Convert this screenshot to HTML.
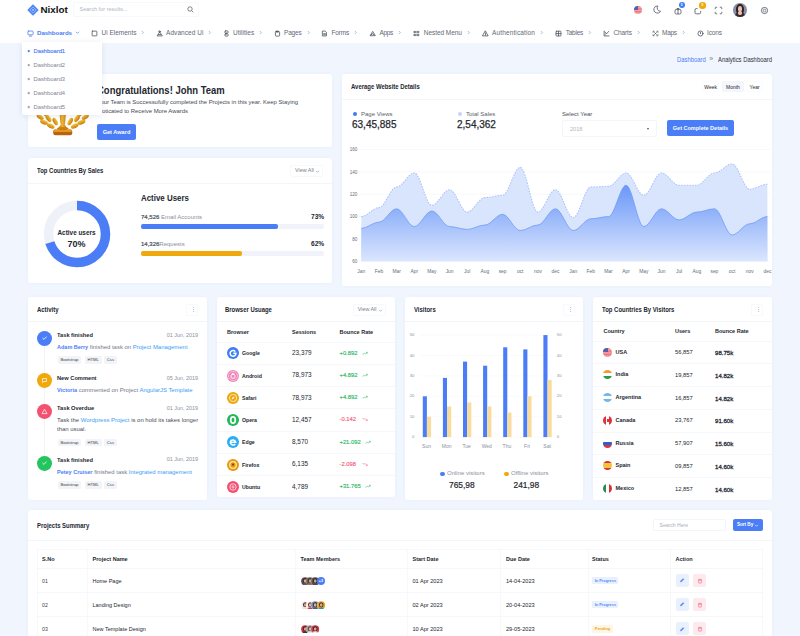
<!DOCTYPE html><html><head><meta charset="utf-8"><title>Nixlot Dashboard</title><style>
*{box-sizing:border-box;margin:0;padding:0}
html,body{width:800px;height:636px;overflow:hidden}
body{background:#f1f6fe;font-family:"Liberation Sans",sans-serif;color:#2b2f3a;position:relative;font-size:6.5px}
.a{position:absolute;white-space:nowrap}
.card{position:absolute;background:#fff;border-radius:3px;box-shadow:0 0 5px rgba(120,150,220,.07)}
.hd{position:absolute;left:0;right:0;top:0;border-bottom:1px solid #f1f3f8}
.t{position:absolute;white-space:nowrap;font-weight:bold;font-size:6.4px;color:#23272f;transform:scaleX(.93);transform-origin:0 50%}
.nx{transform:scaleX(.92);transform-origin:0 50%}
.b{font-weight:bold}
.blue{color:#4a7df6}
.lb{color:#3b9ef5}
.g{color:#8a8f9c}
.g2{color:#757a87}
.nb{font-weight:bold;font-size:5.5px}
.axy{font-size:4.6px;fill:#666b78;font-family:"Liberation Sans",sans-serif}
.ax{font-size:4.9px;fill:#666b78;font-family:"Liberation Sans",sans-serif}
.ax2{font-size:4.2px;fill:#8a8f9c;font-family:"Liberation Sans",sans-serif}
.ax3{font-size:5px;fill:#8a8f9c;font-family:"Liberation Sans",sans-serif}
.btn{position:absolute;background:#4a7df6;color:#fff;font-weight:bold;border-radius:2px;text-align:center;white-space:nowrap}
.sq{position:absolute;border:1px solid #f1f3f8;border-radius:2px;background:#fff}
.tag{position:absolute;font-size:4.2px;color:#3a3f4a;background:#f3f4f8;border-radius:1.5px;height:7.4px;line-height:7.4px;padding:0 2.9px;white-space:nowrap}
.ln{position:absolute;height:1px;background:#f3f5f9}
.ln2{position:absolute;height:1px;background:#f6f7fb}
.circ{position:absolute;border-radius:50%}
.nav{position:absolute;top:28.5px;font-size:6.6px;color:#636978;white-space:nowrap}
</style></head><body><div class="a" style="left:0;top:0;width:800px;height:23px;background:#fff;border-bottom:1px solid #f2f4f8"></div>
<div class="a" style="left:0;top:22px;width:800px;height:21px;background:#fff"></div>
<svg class="a" style="left:26.7px;top:3.8px" width="12" height="12" viewBox="0 0 12 12"><path d="M6 .3L11.700 6L6 11.700L.300 6Z" fill="#4a84f8"/><path d="M6 2.800L9.200 6L6 9.200L2.800 6Z" fill="none" stroke="#a9c6fc" stroke-width=".8"/><path d="M4.700 6L6 4.700L7.300 6L6 7.300Z" fill="#a9c6fc"/></svg>
<div class="a" style="left:40.5px;top:4px;font-size:9.8px;font-weight:bold;color:#111;letter-spacing:0px">Nixlot</div>
<div class="sq" style="left:73px;top:1.8px;width:126px;height:15.4px;border-color:#f7f8fc"></div>
<div class="a" style="left:79.5px;top:6.3px;font-size:5.55px;color:#b0b5bf">Search for results...</div>
<svg class="a" style="left:187px;top:6px" width="7" height="7" viewBox="0 0 7 7"><circle cx="3" cy="3" r="2.2" fill="none" stroke="#555" stroke-width=".7"/><path d="M4.7 4.7L6.2 6.2" stroke="#555" stroke-width=".7"/></svg>
<div class="circ" style="left:633.6px;top:5.6px;width:8.6px;height:8.6px;overflow:hidden;background:linear-gradient(#e8636f 0,#f3a3aa 18%,#ee7580 36%,#f3a3aa 54%,#ee7580 72%,#f3a3aa 90%)"><div class="a" style="left:0;top:0;width:4.6px;height:4.6px;background:#5960a8"></div></div>
<svg class="a" style="left:652.5px;top:5px" width="9" height="9" viewBox="0 0 9 9"><path d="M5 1 A3.6 3.6 0 1 0 7.6 6.2 A3.1 3.1 0 0 1 5 1Z" fill="none" stroke="#5a6070" stroke-width=".85" stroke-linejoin="round"/></svg>
<svg class="a" style="left:673.5px;top:6.6px" width="8" height="8" viewBox="0 0 8 8" fill="none" stroke="#4b5160" stroke-width=".8"><rect x="1" y="2.4" width="6" height="4.6" rx="1.4"/><path d="M2.4 2.4Q4 -.2 4 2.6Q4 -.2 5.6 2.4M4 2.6v4.4"/></svg>
<div class="circ" style="left:678.6px;top:2px;width:6.4px;height:6.4px;background:#3d7df5;color:#fff;font-size:3.4px;font-weight:bold;text-align:center;line-height:6.4px">5</div>
<svg class="a" style="left:694.3px;top:6.8px" width="8" height="8" viewBox="0 0 8 8" fill="none" stroke="#4b5160" stroke-width=".8"><path d="M3.6 1.6H2.2A1.2 1.2 0 0 0 1 2.8V5.6A1.2 1.2 0 0 0 2.2 6.8H5.4A1.2 1.2 0 0 0 6.6 5.6V4"/></svg>
<div class="circ" style="left:699.2px;top:2.4px;width:6.4px;height:6.4px;background:#f0a90c;color:#fff;font-size:3.4px;font-weight:bold;text-align:center;line-height:6.4px">5</div>
<svg class="a" style="left:714.2px;top:6.2px" width="9" height="9" viewBox="0 0 9 9"><path d="M1.2 3.2V2A.8 .8 0 0 1 2 1.2H3.2 M5.8 1.2H7A.8 .8 0 0 1 7.8 2V3.2 M7.8 5.8V7A.8 .8 0 0 1 7 7.8H5.8 M3.2 7.8H2A.8 .8 0 0 1 1.2 7V5.8" fill="none" stroke="#5a6070" stroke-width=".85"/></svg>
<div class="circ" style="left:733px;top:3px;width:13.7px;height:13.7px;background:#8a8fa8;overflow:hidden"><div class="circ" style="left:2.6px;top:1px;width:8.6px;height:11px;background:#2b2226"></div><div class="circ" style="left:4.6px;top:3px;width:4.6px;height:5.6px;background:#e9c3b0"></div><div class="circ" style="left:1.5px;top:9.4px;width:10.6px;height:8px;background:#3a2a30"></div><div class="circ" style="left:5.2px;top:8.2px;width:3.4px;height:3.4px;background:#e9c3b0"></div></div>
<svg class="a" style="left:760.2px;top:6.2px" width="9" height="9" viewBox="0 0 9 9" fill="none" stroke="#5a6070"><circle cx="4.5" cy="4.5" r="3.1" stroke-width=".9"/><circle cx="4.5" cy="4.5" r="1.3" stroke-width=".7"/></svg>
<div class="nav" style="left:37px;font-size:6.20px;letter-spacing:-0.082px;color:#4a7df6;font-weight:bold;">Dashboards</div>
<svg class="a" style="left:26.6px;top:29.5px" width="7" height="7" viewBox="0 0 8 8" fill="none" stroke="#4a7df6" stroke-width=".9" stroke-linecap="round" stroke-linejoin="round"><rect x="1" y="1.2" width="6" height="4.3" rx=".9"/><path d="M2.8 7h2.4"/></svg>
<div class="nav" style="left:101.5px;font-size:6.50px;letter-spacing:-0.001px;">Ui Elements</div>
<svg class="a" style="left:91.1px;top:29.5px" width="7" height="7" viewBox="0 0 8 8" fill="none" stroke="#4b5160" stroke-width=".9" stroke-linecap="round" stroke-linejoin="round"><rect x="1.3" y="1.3" width="5.4" height="5.4" rx=".5"/></svg>
<div class="nav" style="left:166px;font-size:6.50px;letter-spacing:0.061px;">Advanced Ui</div>
<svg class="a" style="left:155.6px;top:29.5px" width="7" height="7" viewBox="0 0 8 8" fill="none" stroke="#4b5160" stroke-width=".9" stroke-linecap="round" stroke-linejoin="round"><path d="M4 2.6L1.2 6.8H6.8Z"/><circle cx="4" cy="1.8" r=".9"/><path d="M2.8 5.2h2.4"/></svg>
<div class="nav" style="left:233px;font-size:6.50px;letter-spacing:0.036px;">Utilities</div>
<svg class="a" style="left:222.6px;top:29.5px" width="7" height="7" viewBox="0 0 8 8" fill="none" stroke="#4b5160" stroke-width=".9" stroke-linecap="round" stroke-linejoin="round"><rect x="2.2" y="1" width="3.6" height="2.6" rx=".7"/><rect x="2.2" y="4.4" width="3.6" height="2.6" rx=".7"/><path d="M4 3.6v.8"/></svg>
<div class="nav" style="left:284px;font-size:6.50px;letter-spacing:-0.183px;">Pages</div>
<svg class="a" style="left:273.6px;top:29.5px" width="7" height="7" viewBox="0 0 8 8" fill="none" stroke="#4b5160" stroke-width=".9" stroke-linecap="round" stroke-linejoin="round"><rect x="1.6" y="1.8" width="4.8" height="5.2" rx=".8"/><path d="M3 1.2h2v1.2h-2z"/></svg>
<div class="nav" style="left:331.5px;font-size:6.50px;letter-spacing:-0.183px;">Forms</div>
<svg class="a" style="left:321.1px;top:29.5px" width="7" height="7" viewBox="0 0 8 8" fill="none" stroke="#4b5160" stroke-width=".9" stroke-linecap="round" stroke-linejoin="round"><path d="M2 1.2h2.8L6.2 2.6V6.8H2Z"/><path d="M3 4.2h2M3 5.4h2"/></svg>
<div class="nav" style="left:379.5px;font-size:6.50px;letter-spacing:-0.326px;">Apps</div>
<svg class="a" style="left:369.1px;top:29.5px" width="7" height="7" viewBox="0 0 8 8" fill="none" stroke="#4b5160" stroke-width=".9" stroke-linecap="round" stroke-linejoin="round"><path d="M4 2L1.2 6.5h5.6Z"/><path d="M2.7 5.5a1.3 1.3 0 0 1 2.6 0"/></svg>
<div class="nav" style="left:423.75px;font-size:6.50px;letter-spacing:-0.055px;">Nested Menu</div>
<svg class="a" style="left:413.35px;top:29.5px" width="7" height="7" viewBox="0 0 8 8" fill="none" stroke="#4b5160" stroke-width=".9" stroke-linecap="round" stroke-linejoin="round"><path d="M1.5 1.6h1.4v1.4h-1.4zM1.5 5h1.4v1.4h-1.4zM4.3 1.6h2.4M4.3 3h2.4M4.3 5h2.4M4.3 6.4h2.4"/></svg>
<div class="nav" style="left:492px;font-size:6.50px;letter-spacing:0.131px;">Authentication</div>
<svg class="a" style="left:481.6px;top:29.5px" width="7" height="7" viewBox="0 0 8 8" fill="none" stroke="#4b5160" stroke-width=".9" stroke-linecap="round" stroke-linejoin="round"><path d="M4 1.3L7 6.7H1Z"/><path d="M4 3.4v1.6M4 5.7v.3"/></svg>
<div class="nav" style="left:565.75px;font-size:6.50px;letter-spacing:-0.254px;">Tables</div>
<svg class="a" style="left:555.35px;top:29.5px" width="7" height="7" viewBox="0 0 8 8" fill="none" stroke="#4b5160" stroke-width=".9" stroke-linecap="round" stroke-linejoin="round"><rect x="1.2" y="1.4" width="5.6" height="5.4" rx=".5"/><path d="M1.2 4.1h5.6M4 1.4v5.4"/></svg>
<div class="nav" style="left:613.5px;font-size:6.50px;letter-spacing:-0.146px;">Charts</div>
<svg class="a" style="left:603.1px;top:29.5px" width="7" height="7" viewBox="0 0 8 8" fill="none" stroke="#4b5160" stroke-width=".9" stroke-linecap="round" stroke-linejoin="round"><path d="M1.3 1.2V6.8H6.9"/><path d="M2.3 2.2L3.8 4.6L6.6 1.6"/><path d="M2.6 5.6h.2"/></svg>
<div class="nav" style="left:662px;font-size:6.50px;letter-spacing:-0.277px;">Maps</div>
<svg class="a" style="left:651.6px;top:29.5px" width="7" height="7" viewBox="0 0 8 8" fill="none" stroke="#4b5160" stroke-width=".9" stroke-linecap="round" stroke-linejoin="round"><path d="M1.2 2.6V1.4h1.2M5.6 1.4h1.2v1.2M6.8 5.4v1.2h-1.2M2.4 6.6H1.2V5.4"/><path d="M3 3l2 2M5 3l-2 2"/></svg>
<div class="nav" style="left:707px;font-size:6.50px;letter-spacing:-0.156px;">Icons</div>
<svg class="a" style="left:696.6px;top:29.5px" width="7" height="7" viewBox="0 0 8 8" fill="none" stroke="#4b5160" stroke-width=".9" stroke-linecap="round" stroke-linejoin="round"><circle cx="4" cy="4" r="2.9"/><path d="M4 2.6v1.6"/></svg>
<svg class="a" style="left:75.3px;top:30px" width="5" height="5" viewBox="0 0 5 5"><path d="M1 1.8L2.5 3.3L4 1.8" fill="none" stroke="#4a7df6" stroke-width=".7"/></svg>
<svg class="a" style="left:140px;top:30px" width="5" height="5" viewBox="0 0 5 5"><path d="M1.8 1L3.3 2.5L1.8 4" fill="none" stroke="#8a8f9c" stroke-width=".6"/></svg>
<svg class="a" style="left:206.5px;top:30px" width="5" height="5" viewBox="0 0 5 5"><path d="M1.8 1L3.3 2.5L1.8 4" fill="none" stroke="#8a8f9c" stroke-width=".6"/></svg>
<svg class="a" style="left:257.8px;top:30px" width="5" height="5" viewBox="0 0 5 5"><path d="M1.8 1L3.3 2.5L1.8 4" fill="none" stroke="#8a8f9c" stroke-width=".6"/></svg>
<svg class="a" style="left:305.5px;top:30px" width="5" height="5" viewBox="0 0 5 5"><path d="M1.8 1L3.3 2.5L1.8 4" fill="none" stroke="#8a8f9c" stroke-width=".6"/></svg>
<svg class="a" style="left:352.8px;top:30px" width="5" height="5" viewBox="0 0 5 5"><path d="M1.8 1L3.3 2.5L1.8 4" fill="none" stroke="#8a8f9c" stroke-width=".6"/></svg>
<svg class="a" style="left:397.2px;top:30px" width="5" height="5" viewBox="0 0 5 5"><path d="M1.8 1L3.3 2.5L1.8 4" fill="none" stroke="#8a8f9c" stroke-width=".6"/></svg>
<svg class="a" style="left:465.5px;top:30px" width="5" height="5" viewBox="0 0 5 5"><path d="M1.8 1L3.3 2.5L1.8 4" fill="none" stroke="#8a8f9c" stroke-width=".6"/></svg>
<svg class="a" style="left:539px;top:30px" width="5" height="5" viewBox="0 0 5 5"><path d="M1.8 1L3.3 2.5L1.8 4" fill="none" stroke="#8a8f9c" stroke-width=".6"/></svg>
<svg class="a" style="left:587px;top:30px" width="5" height="5" viewBox="0 0 5 5"><path d="M1.8 1L3.3 2.5L1.8 4" fill="none" stroke="#8a8f9c" stroke-width=".6"/></svg>
<svg class="a" style="left:635.5px;top:30px" width="5" height="5" viewBox="0 0 5 5"><path d="M1.8 1L3.3 2.5L1.8 4" fill="none" stroke="#8a8f9c" stroke-width=".6"/></svg>
<svg class="a" style="left:680.8px;top:30px" width="5" height="5" viewBox="0 0 5 5"><path d="M1.8 1L3.3 2.5L1.8 4" fill="none" stroke="#8a8f9c" stroke-width=".6"/></svg>
<div class="a nx" style="left:676.5px;top:55.6px;font-size:6.4px;color:#4a7df6">Dashboard</div>
<div class="a" style="left:709.3px;top:54.6px;font-size:7px;color:#7a7f8c">»</div>
<div class="a nx" style="left:717.5px;top:55.6px;font-size:6.4px;color:#2b2f3a">Analytics Dashboard</div>
<div class="card" style="left:28.3px;top:74.2px;width:303.7px;height:72.4px"></div>
<div class="card" style="left:28.3px;top:158.3px;width:303.7px;height:125.2px"></div>
<div class="card" style="left:341.7px;top:74.2px;width:430.3px;height:212.3px"></div>
<div class="card" style="left:28px;top:297px;width:179px;height:203px"></div>
<div class="card" style="left:217px;top:297px;width:178px;height:200.4px"></div>
<div class="card" style="left:405px;top:297px;width:178px;height:203px"></div>
<div class="card" style="left:593px;top:297px;width:179px;height:203px"></div>
<div class="card" style="left:28px;top:510.3px;width:744px;height:140px"></div>
<div class="a nx" style="left:97px;top:84.8px;font-size:10.3px;font-weight:bold;color:#23272f">Congratulations! John Team</div>
<div class="a" style="left:97px;top:98.8px;font-size:5.9px;color:#444955">Your Team is Successufully completed the Projects in this year. Keep Staying</div>
<div class="a" style="left:97px;top:107.8px;font-size:5.9px;color:#444955">Moticated to Receive More Awards</div>
<div class="btn" style="left:97px;top:124px;width:39px;height:16px;line-height:16px;font-size:5.6px">Get Award</div>
<svg class="a" style="left:0;top:0" width="140" height="150" viewBox="0 0 140 150"><defs><linearGradient id="tg" x1="0" y1="0" x2="0" y2="1"><stop offset="0" stop-color="#f7c83c"/><stop offset="1" stop-color="#c87a0a"/></linearGradient><linearGradient id="ts" x1="0" y1="0" x2="1" y2="0"><stop offset="0" stop-color="#b8680a"/><stop offset=".45" stop-color="#f0b832"/><stop offset="1" stop-color="#b8680a"/></linearGradient></defs><path d="M50 88h25.5v14q0 10 -9.5 12.5h-6.500q-9.500 -2.500 -9.500 -12.500z" fill="url(#ts)"/><path d="M59.300 110H66.200L65.400 120Q65.200 124 64.600 124.500L67.500 128.500H58L60.900 124.500Q60.300 124 60.100 120Z" fill="url(#ts)"/><rect x="53.2" y="129.6" width="19.1" height="5.6" rx="2.2" fill="#b9630c"/><rect x="53.6" y="129.4" width="18.3" height="2.6" rx="1.3" fill="#e39a22"/><ellipse cx="62.750" cy="128.600" rx="5.800" ry="1.700" fill="#cf7d10"/><ellipse cx="40.25" cy="117.00" rx="4.1" ry="2.1" transform="rotate(35 40.25 117.00)" fill="url(#tg)"/><ellipse cx="85.25" cy="117.00" rx="4.1" ry="2.1" transform="rotate(-35 85.25 117.00)" fill="url(#tg)"/><ellipse cx="48.50" cy="118.50" rx="4.1" ry="2.1" transform="rotate(55 48.50 118.50)" fill="url(#tg)"/><ellipse cx="77.00" cy="118.50" rx="4.1" ry="2.1" transform="rotate(-55 77.00 118.50)" fill="url(#tg)"/><ellipse cx="44.00" cy="122.25" rx="4.1" ry="2.1" transform="rotate(20 44.00 122.25)" fill="url(#tg)"/><ellipse cx="81.50" cy="122.25" rx="4.1" ry="2.1" transform="rotate(-20 81.50 122.25)" fill="url(#tg)"/><ellipse cx="50.75" cy="126.00" rx="4.1" ry="2.1" transform="rotate(25 50.75 126.00)" fill="url(#tg)"/><ellipse cx="74.75" cy="126.00" rx="4.1" ry="2.1" transform="rotate(-25 74.75 126.00)" fill="url(#tg)"/><ellipse cx="55.25" cy="121.50" rx="4.1" ry="2.1" transform="rotate(60 55.25 121.50)" fill="url(#tg)"/><ellipse cx="70.25" cy="121.50" rx="4.1" ry="2.1" transform="rotate(-60 70.25 121.50)" fill="url(#tg)"/><ellipse cx="36.50" cy="112.00" rx="4.1" ry="2.1" transform="rotate(50 36.50 112.00)" fill="url(#tg)"/><ellipse cx="89.00" cy="112.00" rx="4.1" ry="2.1" transform="rotate(-50 89.00 112.00)" fill="url(#tg)"/><ellipse cx="45.00" cy="112.50" rx="4.1" ry="2.1" transform="rotate(70 45.00 112.50)" fill="url(#tg)"/><ellipse cx="80.50" cy="112.50" rx="4.1" ry="2.1" transform="rotate(-70 80.50 112.50)" fill="url(#tg)"/></svg>
<div class="t" style="left:37px;top:167px;">Top Countries By Sales</div>
<div class="sq" style="left:290px;top:164.5px;width:33px;height:12px;border-color:#f7f8fb"></div>
<div class="a" style="left:295px;top:167.2px;font-size:5.4px;color:#7a7f8c">View All</div>
<svg class="a" style="left:315px;top:168.5px" width="5" height="5" viewBox="0 0 5 5"><path d="M1 1.8L2.5 3.3L4 1.8" fill="none" stroke="#8a8f9c" stroke-width=".6"/></svg>
<div class="ln" style="left:28px;top:182.6px;width:304px"></div>
<svg class="a" style="left:42.6px;top:199.7px" width="68" height="68" viewBox="0 0 68 68"><circle cx="34" cy="34" r="28.5" fill="none" stroke="#eef1f8" stroke-width="9.5"/><circle cx="34" cy="34" r="28.5" fill="none" stroke="#4a7df6" stroke-width="9.5" stroke-dasharray="125.3 200" transform="rotate(-90 34 34)"/></svg>
<div class="a" style="left:57.5px;top:228.6px;font-size:6.4px;font-weight:bold;color:#23272f">Active users</div>
<div class="a" style="left:67.5px;top:239px;font-size:9px;color:#23272f;font-weight:bold">70%</div>
<div class="a nx" style="left:141px;top:192.5px;font-size:8.6px;color:#23272f;font-weight:bold">Active Users</div>
<div class="a" style="left:141px;top:213.5px;font-size:6px"><span style="color:#4a4f5a;-webkit-text-stroke:.2px #4a4f5a">74,526</span> <span class="g">Email Accounts</span></div>
<div class="a" style="left:311px;top:213px;font-size:6.6px;font-weight:bold;color:#23272f">73%</div>
<div class="a" style="left:141px;top:224.4px;width:183px;height:4.9px;background:#f0f3f9;border-radius:2px"></div>
<div class="a" style="left:141px;top:224.4px;width:137px;height:4.9px;background:#4a7df6;border-radius:2px"></div>
<div class="a" style="left:141px;top:240.5px;font-size:6px"><span style="color:#4a4f5a;-webkit-text-stroke:.2px #4a4f5a">14,326</span><span class="g">Requests</span></div>
<div class="a" style="left:311px;top:240px;font-size:6.6px;font-weight:bold;color:#23272f">62%</div>
<div class="a" style="left:141px;top:251px;width:183px;height:5px;background:#f0f3f9;border-radius:2px"></div>
<div class="a" style="left:141px;top:251px;width:101px;height:5px;background:#f0a90c;border-radius:2px"></div>
<div class="t" style="left:351px;top:83.2px;">Average Website Details</div>
<div class="ln" style="left:342px;top:98.7px;width:430px"></div>
<div class="sq" style="left:702.4px;top:81px;width:17px;height:11px;border-color:#fafbfd"></div><div class="sq" style="left:722px;top:81px;width:22px;height:11px;background:#f5f7fc;border-color:#f3f5fa"></div><div class="sq" style="left:746.4px;top:81px;width:16.6px;height:11px;border-color:#fafbfd"></div>
<div class="a" style="left:704.3px;top:84.2px;font-size:5px;color:#23272f">Week</div>
<div class="a" style="left:726px;top:84.2px;font-size:5px;color:#23272f">Month</div>
<div class="a" style="left:749.5px;top:84.2px;font-size:5px;color:#23272f">Year</div>
<div class="circ" style="left:352.6px;top:111.8px;width:4.5px;height:4.5px;background:#3f7af5"></div>
<div class="a" style="left:361px;top:110.7px;font-size:6px;color:#5a5f6c">Page Views</div>
<div class="a" style="left:352px;top:118.7px;font-size:10px;color:#23272f;-webkit-text-stroke:.25px #23272f">63,45,885</div>
<div class="circ" style="left:457.6px;top:111.8px;width:4.5px;height:4.5px;background:#c5d6fb"></div>
<div class="a" style="left:466px;top:110.7px;font-size:6px;color:#5a5f6c">Total Sales</div>
<div class="a" style="left:457px;top:118.7px;font-size:10px;color:#23272f;-webkit-text-stroke:.25px #23272f">2,54,362</div>
<div class="a" style="left:562px;top:110.8px;font-size:6px;color:#4a4f5a">Select Year</div>
<div class="sq" style="left:562px;top:120px;width:95px;height:17px;border-color:#f3f5f9"></div>
<div class="a" style="left:570px;top:125.5px;font-size:5.6px;color:#b3b7c0">2018</div>
<div class="a" style="left:647px;top:127.6px;border:1.9px solid transparent;border-top:2.2px solid #4b5160;"></div>
<div class="btn" style="left:667px;top:120px;width:67px;height:16px;line-height:16px;font-size:5.5px">Get Complete Details</div>
<svg class="a" style="left:0;top:0" width="800" height="636" viewBox="0 0 800 636"><defs><linearGradient id="ag" x1="0" y1="0" x2="0" y2="1"><stop offset="0" stop-color="#6a97f8"/><stop offset="1" stop-color="#dbe6fd"/></linearGradient></defs><line x1="359" x2="770" y1="261.3" y2="261.3" stroke="#f1f3f8" stroke-width="0.6"/>
<line x1="359" x2="770" y1="238.9" y2="238.9" stroke="#f1f3f8" stroke-width="0.6"/>
<line x1="359" x2="770" y1="216.6" y2="216.6" stroke="#f1f3f8" stroke-width="0.6"/>
<line x1="359" x2="770" y1="194.2" y2="194.2" stroke="#f1f3f8" stroke-width="0.6"/>
<line x1="359" x2="770" y1="171.9" y2="171.9" stroke="#f1f3f8" stroke-width="0.6"/>
<line x1="359" x2="770" y1="149.5" y2="149.5" stroke="#f1f3f8" stroke-width="0.6"/>
<path d="M361.3 216.6 C367.5 216.6 372.8 207.6 379.0 207.6 C385.1 207.6 390.4 187.0 396.6 187.0 C402.8 187.0 408.1 173.0 414.3 173.0 C420.4 173.0 425.7 205.4 431.9 205.4 C438.1 205.4 443.4 189.7 449.6 189.7 C455.8 189.7 461.1 212.1 467.2 212.1 C473.4 212.1 478.7 197.6 484.9 197.6 C491.1 197.6 496.4 195.3 502.6 195.3 C508.7 195.3 514.0 167.4 520.2 167.4 C526.4 167.4 531.7 212.1 537.9 212.1 C544.0 212.1 549.3 189.7 555.5 189.7 C561.7 189.7 567.0 217.7 573.2 217.7 C579.4 217.7 584.7 187.0 590.8 187.0 C597.0 187.0 602.3 186.4 608.5 186.4 C614.7 186.4 620.0 173.0 626.1 173.0 C632.3 173.0 637.6 195.3 643.8 195.3 C650.0 195.3 655.3 173.0 661.5 173.0 C667.6 173.0 672.9 185.3 679.1 185.3 C685.3 185.3 690.6 185.3 696.8 185.3 C703.0 185.3 708.3 173.0 714.4 173.0 C720.6 173.0 725.9 164.0 732.1 164.0 C738.3 164.0 743.6 189.2 749.7 189.2 C755.9 189.2 761.2 184.2 767.4 184.2 L767.4 261.3 L361.3 261.3 Z" fill="#d9e5fd"/>
<path d="M361.3 216.6 C367.5 216.6 372.8 207.6 379.0 207.6 C385.1 207.6 390.4 187.0 396.6 187.0 C402.8 187.0 408.1 173.0 414.3 173.0 C420.4 173.0 425.7 205.4 431.9 205.4 C438.1 205.4 443.4 189.7 449.6 189.7 C455.8 189.7 461.1 212.1 467.2 212.1 C473.4 212.1 478.7 197.6 484.9 197.6 C491.1 197.6 496.4 195.3 502.6 195.3 C508.7 195.3 514.0 167.4 520.2 167.4 C526.4 167.4 531.7 212.1 537.9 212.1 C544.0 212.1 549.3 189.7 555.5 189.7 C561.7 189.7 567.0 217.7 573.2 217.7 C579.4 217.7 584.7 187.0 590.8 187.0 C597.0 187.0 602.3 186.4 608.5 186.4 C614.7 186.4 620.0 173.0 626.1 173.0 C632.3 173.0 637.6 195.3 643.8 195.3 C650.0 195.3 655.3 173.0 661.5 173.0 C667.6 173.0 672.9 185.3 679.1 185.3 C685.3 185.3 690.6 185.3 696.8 185.3 C703.0 185.3 708.3 173.0 714.4 173.0 C720.6 173.0 725.9 164.0 732.1 164.0 C738.3 164.0 743.6 189.2 749.7 189.2 C755.9 189.2 761.2 184.2 767.4 184.2" fill="none" stroke="#adc4fa" stroke-width="1.1" stroke-dasharray="1.6 1.2"/>
<path d="M361.3 228.3 C367.5 228.3 372.8 222.2 379.0 222.2 C385.1 222.2 390.4 208.8 396.6 208.8 C402.8 208.8 408.1 226.6 414.3 226.6 C420.4 226.6 425.7 211.0 431.9 211.0 C438.1 211.0 443.4 226.6 449.6 226.6 C455.8 226.6 461.1 229.4 467.2 229.4 C473.4 229.4 478.7 225.0 484.9 225.0 C491.1 225.0 496.4 214.3 502.6 214.3 C508.7 214.3 514.0 230.6 520.2 230.6 C526.4 230.6 531.7 225.0 537.9 225.0 C544.0 225.0 549.3 208.8 555.5 208.8 C561.7 208.8 567.0 230.6 573.2 230.6 C579.4 230.6 584.7 218.8 590.8 218.8 C597.0 218.8 602.3 216.6 608.5 216.6 C614.7 216.6 620.0 185.3 626.1 185.3 C632.3 185.3 637.6 226.6 643.8 226.6 C650.0 226.6 655.3 208.8 661.5 208.8 C667.6 208.8 672.9 219.9 679.1 219.9 C685.3 219.9 690.6 212.1 696.8 212.1 C703.0 212.1 708.3 208.8 714.4 208.8 C720.6 208.8 725.9 235.0 732.1 235.0 C738.3 235.0 743.6 223.8 749.7 223.8 C755.9 223.8 761.2 216.6 767.4 216.6 L767.4 261.3 L361.3 261.3 Z" fill="url(#ag)"/>
<path d="M361.3 228.3 C367.5 228.3 372.8 222.2 379.0 222.2 C385.1 222.2 390.4 208.8 396.6 208.8 C402.8 208.8 408.1 226.6 414.3 226.6 C420.4 226.6 425.7 211.0 431.9 211.0 C438.1 211.0 443.4 226.6 449.6 226.6 C455.8 226.6 461.1 229.4 467.2 229.4 C473.4 229.4 478.7 225.0 484.9 225.0 C491.1 225.0 496.4 214.3 502.6 214.3 C508.7 214.3 514.0 230.6 520.2 230.6 C526.4 230.6 531.7 225.0 537.9 225.0 C544.0 225.0 549.3 208.8 555.5 208.8 C561.7 208.8 567.0 230.6 573.2 230.6 C579.4 230.6 584.7 218.8 590.8 218.8 C597.0 218.8 602.3 216.6 608.5 216.6 C614.7 216.6 620.0 185.3 626.1 185.3 C632.3 185.3 637.6 226.6 643.8 226.6 C650.0 226.6 655.3 208.8 661.5 208.8 C667.6 208.8 672.9 219.9 679.1 219.9 C685.3 219.9 690.6 212.1 696.8 212.1 C703.0 212.1 708.3 208.8 714.4 208.8 C720.6 208.8 725.9 235.0 732.1 235.0 C738.3 235.0 743.6 223.8 749.7 223.8 C755.9 223.8 761.2 216.6 767.4 216.6" fill="none" stroke="#6f9af8" stroke-width="0.8"/>
<text x="361.3" y="272.9" text-anchor="middle" class="ax">Jan</text>
<text x="379.0" y="272.9" text-anchor="middle" class="ax">Feb</text>
<text x="396.6" y="272.9" text-anchor="middle" class="ax">Mar</text>
<text x="414.3" y="272.9" text-anchor="middle" class="ax">Apr</text>
<text x="431.9" y="272.9" text-anchor="middle" class="ax">May</text>
<text x="449.6" y="272.9" text-anchor="middle" class="ax">Jun</text>
<text x="467.2" y="272.9" text-anchor="middle" class="ax">Jul</text>
<text x="484.9" y="272.9" text-anchor="middle" class="ax">Aug</text>
<text x="502.6" y="272.9" text-anchor="middle" class="ax">sep</text>
<text x="520.2" y="272.9" text-anchor="middle" class="ax">oct</text>
<text x="537.9" y="272.9" text-anchor="middle" class="ax">nov</text>
<text x="555.5" y="272.9" text-anchor="middle" class="ax">dec</text>
<text x="573.2" y="272.9" text-anchor="middle" class="ax">Jan</text>
<text x="590.8" y="272.9" text-anchor="middle" class="ax">Feb</text>
<text x="608.5" y="272.9" text-anchor="middle" class="ax">Mar</text>
<text x="626.1" y="272.9" text-anchor="middle" class="ax">Apr</text>
<text x="643.8" y="272.9" text-anchor="middle" class="ax">May</text>
<text x="661.5" y="272.9" text-anchor="middle" class="ax">Jun</text>
<text x="679.1" y="272.9" text-anchor="middle" class="ax">Jul</text>
<text x="696.8" y="272.9" text-anchor="middle" class="ax">Aug</text>
<text x="714.4" y="272.9" text-anchor="middle" class="ax">sep</text>
<text x="732.1" y="272.9" text-anchor="middle" class="ax">oct</text>
<text x="749.7" y="272.9" text-anchor="middle" class="ax">nov</text>
<text x="767.4" y="272.9" text-anchor="middle" class="ax">dec</text>
<text x="357.3" y="151.1" text-anchor="end" class="axy">160</text>
<text x="357.3" y="173.5" text-anchor="end" class="axy">140</text>
<text x="357.3" y="195.8" text-anchor="end" class="axy">120</text>
<text x="357.3" y="218.2" text-anchor="end" class="axy">100</text>
<text x="357.3" y="240.5" text-anchor="end" class="axy">80</text>
<text x="357.3" y="262.9" text-anchor="end" class="axy">60</text><line x1="420" x2="552" y1="437.1" y2="437.1" stroke="#f3f5f9" stroke-width="0.5"/>
<text x="414.3" y="438.1" text-anchor="end" class="ax2">0</text>
<text x="556.8" y="438.1" class="ax2">0</text>
<line x1="420" x2="552" y1="416.7" y2="416.7" stroke="#f3f5f9" stroke-width="0.5"/>
<text x="414.3" y="417.7" text-anchor="end" class="ax2">10</text>
<text x="556.8" y="417.7" class="ax2">10</text>
<line x1="420" x2="552" y1="396.3" y2="396.3" stroke="#f3f5f9" stroke-width="0.5"/>
<text x="414.3" y="397.3" text-anchor="end" class="ax2">20</text>
<text x="556.8" y="397.3" class="ax2">20</text>
<line x1="420" x2="552" y1="375.9" y2="375.9" stroke="#f3f5f9" stroke-width="0.5"/>
<text x="414.3" y="376.9" text-anchor="end" class="ax2">30</text>
<text x="556.8" y="376.9" class="ax2">30</text>
<line x1="420" x2="552" y1="355.5" y2="355.5" stroke="#f3f5f9" stroke-width="0.5"/>
<text x="414.3" y="356.5" text-anchor="end" class="ax2">40</text>
<text x="556.8" y="356.5" class="ax2">40</text>
<line x1="420" x2="552" y1="335.1" y2="335.1" stroke="#f3f5f9" stroke-width="0.5"/>
<text x="414.3" y="336.1" text-anchor="end" class="ax2">50</text>
<text x="556.8" y="336.1" class="ax2">50</text>
<rect x="422.8" y="396.3" width="4.1" height="40.8" fill="#4a7df6"/>
<rect x="426.9" y="416.7" width="4.2" height="20.4" fill="#f8dc9c"/>
<text x="426.5" y="447.5" text-anchor="middle" class="ax3">Sun</text>
<rect x="442.9" y="377.9" width="4.1" height="59.2" fill="#4a7df6"/>
<rect x="447.0" y="406.5" width="4.2" height="30.6" fill="#f8dc9c"/>
<text x="446.6" y="447.5" text-anchor="middle" class="ax3">Mon</text>
<rect x="463.0" y="361.6" width="4.1" height="75.5" fill="#4a7df6"/>
<rect x="467.1" y="402.4" width="4.2" height="34.7" fill="#f8dc9c"/>
<text x="466.7" y="447.5" text-anchor="middle" class="ax3">Tue</text>
<rect x="483.1" y="365.7" width="4.1" height="71.4" fill="#4a7df6"/>
<rect x="487.2" y="406.5" width="4.2" height="30.6" fill="#f8dc9c"/>
<text x="486.8" y="447.5" text-anchor="middle" class="ax3">Wed</text>
<rect x="503.2" y="347.3" width="4.1" height="89.8" fill="#4a7df6"/>
<rect x="507.3" y="412.6" width="4.2" height="24.5" fill="#f8dc9c"/>
<text x="506.9" y="447.5" text-anchor="middle" class="ax3">Thu</text>
<rect x="523.3" y="349.4" width="4.1" height="87.7" fill="#4a7df6"/>
<rect x="527.4" y="396.3" width="4.2" height="40.8" fill="#f8dc9c"/>
<text x="527.0" y="447.5" text-anchor="middle" class="ax3">Fri</text>
<rect x="543.4" y="335.1" width="4.1" height="102.0" fill="#4a7df6"/>
<rect x="547.5" y="380.0" width="4.2" height="57.1" fill="#f8dc9c"/>
<text x="547.1" y="447.5" text-anchor="middle" class="ax3">Sat</text></svg>
<div class="t" style="left:37px;top:306px;">Activity</div>
<div class="sq" style="left:186px;top:303.5px;width:12px;height:12px;border-color:#f8f9fc"></div>
<div class="a" style="left:190.6px;top:306px;font-size:5px;color:#8a8f9c">⋮</div>
<div class="ln" style="left:28px;top:321px;width:179px"></div>
<div class="a" style="left:43.7px;top:340px;width:1px;height:125px;background:#f1f3f8"></div>
<div class="circ" style="left:36.8px;top:330.8px;width:14.8px;height:14.8px;background:#4a7df6"></div>
<div class="a" style="left:57px;top:331.5px;font-size:5.7px;font-weight:bold;color:#23272f">Task finished</div>
<div class="a" style="right:602px;top:332px;font-size:5.4px;color:#8a8f9c">01 Jun, 2019</div>
<div class="a" style="left:57px;top:344px;font-size:5.95px"><span class="blue nb">Adam Berry</span> <span class="g2">finished task on</span> <span class="lb">Project Management</span></div>
<div class="tag" style="left:57.5px;top:356.25px">Bootstrap</div>
<div class="tag" style="left:84.6px;top:356.25px">HTML</div>
<div class="tag" style="left:103.9px;top:356.25px">Css</div>
<div class="circ" style="left:36.8px;top:373.25px;width:14.8px;height:14.8px;background:#f0a90c"></div>
<div class="a" style="left:57px;top:375px;font-size:5.7px;font-weight:bold;color:#23272f">New Comment</div>
<div class="a" style="right:602px;top:374.5px;font-size:5.4px;color:#8a8f9c">05 Jun, 2019</div>
<div class="a" style="left:57px;top:387px;font-size:5.95px"><span class="blue nb">Victoria</span> <span class="g2">commented on Project</span> <span class="lb">AngularJS Template</span></div>
<div class="circ" style="left:36.8px;top:404.25px;width:14.8px;height:14.8px;background:#f4506f"></div>
<div class="a" style="left:57px;top:405.2px;font-size:5.7px;font-weight:bold;color:#23272f">Task Overdue</div>
<div class="a" style="right:602px;top:404.5px;font-size:5.4px;color:#8a8f9c">01 Jun, 2019</div>
<div class="a" style="left:57px;top:417px;font-size:5.95px"><span style="color:#4a4f5a">Task the <span class="lb">Wordpress Project</span> is on hold its takes longer</span></div>
<div class="a" style="left:57px;top:426px;font-size:5.95px"><span style="color:#4a4f5a">than usual.</span></div>
<div class="tag" style="left:57.5px;top:438.75px">Bootstrap</div>
<div class="tag" style="left:84.6px;top:438.75px">HTML</div>
<div class="tag" style="left:103.9px;top:438.75px">Css</div>
<div class="circ" style="left:36.8px;top:455.75px;width:14.8px;height:14.8px;background:#22c55e"></div>
<div class="a" style="left:57px;top:456.5px;font-size:5.7px;font-weight:bold;color:#23272f">Task finished</div>
<div class="a" style="right:602px;top:456px;font-size:5.4px;color:#8a8f9c">01 Jun, 2019</div>
<div class="a" style="left:57px;top:469px;font-size:5.95px"><span class="blue nb">Petey Cruiser</span> <span class="g2">finished task</span> <span class="lb">Integrated management</span></div>
<div class="tag" style="left:57.5px;top:481.25px">Bootstrap</div>
<div class="tag" style="left:84.6px;top:481.25px">HTML</div>
<div class="tag" style="left:103.9px;top:481.25px">Css</div>
<svg class="a" style="left:40.7px;top:335.3px" width="7" height="6" viewBox="0 0 7 6"><path d="M1.5 3L3 4.4L5.5 1.6" fill="none" stroke="#fff" stroke-width=".8"/></svg>
<svg class="a" style="left:40.7px;top:460.2px" width="7" height="6" viewBox="0 0 7 6"><path d="M1.5 3L3 4.4L5.5 1.6" fill="none" stroke="#fff" stroke-width=".8"/></svg>
<svg class="a" style="left:40.7px;top:377.3px" width="7" height="7" viewBox="0 0 7 7"><path d="M1.5 1.5h4v3h-2.5l-1.5 1.2z" fill="none" stroke="#fff" stroke-width=".7"/></svg>
<svg class="a" style="left:40.7px;top:408px" width="7" height="7" viewBox="0 0 7 7"><path d="M3.5 1.2L6 5.6H1z" fill="none" stroke="#fff" stroke-width=".7"/></svg>
<div class="t" style="left:225px;top:306px;">Browser Usuage</div>
<div class="sq" style="left:353px;top:303.5px;width:33px;height:12px;border-color:#f7f8fb"></div>
<div class="a" style="left:357.7px;top:306.2px;font-size:5.4px;color:#7a7f8c">View All</div>
<svg class="a" style="left:378.3px;top:307.5px" width="5" height="5" viewBox="0 0 5 5"><path d="M1 1.8L2.5 3.3L4 1.8" fill="none" stroke="#8a8f9c" stroke-width=".6"/></svg>
<div class="ln" style="left:217px;top:321px;width:178px"></div>
<div class="a" style="left:227px;top:328.7px;font-size:5.5px;font-weight:bold;color:#23272f">Browser</div>
<div class="a" style="left:292px;top:328.7px;font-size:5.5px;font-weight:bold;color:#23272f">Sessions</div>
<div class="a" style="left:339.5px;top:328.7px;font-size:5.5px;font-weight:bold;color:#23272f">Bounce Rate</div>
<div class="ln2" style="left:217px;top:341.7px;width:178px"></div>
<svg class="a" style="left:226.6px;top:347.3px" width="12" height="12" viewBox="0 0 12 12"><circle cx="6" cy="6" r="6" fill="#3d7df5"/><path d="M8.3 4.6A2.9 2.9 0 1 0 8.9 6.3H6.3" fill="none" stroke="#fff" stroke-width="1.5"/></svg>
<div class="a" style="left:242px;top:350.3px;font-size:5.2px;font-weight:bold;color:#23272f">Google</div>
<div class="a" style="left:292px;top:349.1px;font-size:6.4px;color:#23272f">23,379</div>
<div class="a" style="left:339.5px;top:349.7px;font-size:5.8px;color:#2fb868;-webkit-text-stroke:.15px #2fb868">+0.892</div>
<svg class="a" style="left:361.5px;top:350.5px" width="6" height="5" viewBox="0 0 6 5"><path d="M.5 3.300L2.500 2.300L3.300 2.800L5.300 1.500M4 1.200l1.400 .2l-.3 1.300" fill="none" stroke="#2fb868" stroke-width=".55"/></svg>
<div class="ln2" style="left:217px;top:363.95px;width:178px"></div>
<svg class="a" style="left:226.6px;top:369.55px" width="12" height="12" viewBox="0 0 12 12"><circle cx="6" cy="6" r="6" fill="#f084b8"/><circle cx="6" cy="6" r="4.6" fill="none" stroke="#f8bcd8" stroke-width="1"/><rect x="4.1" y="4.6" width="3.8" height="3.6" rx=".8" fill="none" stroke="#fff" stroke-width=".9"/><path d="M4.6 4.2Q6 2.4 7.400 4.200" fill="none" stroke="#fff" stroke-width=".9"/></svg>
<div class="a" style="left:242px;top:372.55px;font-size:5.2px;font-weight:bold;color:#23272f">Android</div>
<div class="a" style="left:292px;top:371.35px;font-size:6.4px;color:#23272f">78,973</div>
<div class="a" style="left:339.5px;top:371.95px;font-size:5.8px;color:#2fb868;-webkit-text-stroke:.15px #2fb868">+4.892</div>
<svg class="a" style="left:361.5px;top:372.75px" width="6" height="5" viewBox="0 0 6 5"><path d="M.5 3.300L2.500 2.300L3.300 2.800L5.300 1.500M4 1.200l1.400 .2l-.3 1.300" fill="none" stroke="#2fb868" stroke-width=".55"/></svg>
<div class="ln2" style="left:217px;top:386.2px;width:178px"></div>
<svg class="a" style="left:226.6px;top:391.8px" width="12" height="12" viewBox="0 0 12 12"><circle cx="6" cy="6" r="6" fill="#eba70d"/><circle cx="6" cy="6" r="3.500" fill="none" stroke="#fbe2a0" stroke-width="1.100"/><path d="M7.600 4.400L5.400 5.400L4.400 7.600L6.600 6.600Z" fill="#fff"/></svg>
<div class="a" style="left:242px;top:394.8px;font-size:5.2px;font-weight:bold;color:#23272f">Safari</div>
<div class="a" style="left:292px;top:393.6px;font-size:6.4px;color:#23272f">78,973</div>
<div class="a" style="left:339.5px;top:394.2px;font-size:5.8px;color:#2fb868;-webkit-text-stroke:.15px #2fb868">+4.892</div>
<svg class="a" style="left:361.5px;top:395.0px" width="6" height="5" viewBox="0 0 6 5"><path d="M.5 3.300L2.500 2.300L3.300 2.800L5.300 1.500M4 1.200l1.400 .2l-.3 1.300" fill="none" stroke="#2fb868" stroke-width=".55"/></svg>
<div class="ln2" style="left:217px;top:408.45px;width:178px"></div>
<svg class="a" style="left:226.6px;top:414.05px" width="12" height="12" viewBox="0 0 12 12"><circle cx="6" cy="6" r="6" fill="#1fb85a"/><ellipse cx="6" cy="6" rx="2.300" ry="3.100" fill="none" stroke="#fff" stroke-width="1.700"/></svg>
<div class="a" style="left:242px;top:417.05px;font-size:5.2px;font-weight:bold;color:#23272f">Opera</div>
<div class="a" style="left:292px;top:415.85px;font-size:6.4px;color:#23272f">12,457</div>
<div class="a" style="left:339.5px;top:416.45px;font-size:5.8px;color:#f4607a;-webkit-text-stroke:.15px #f4607a">-0.142</div>
<svg class="a" style="left:361.5px;top:417.25px" width="6" height="5" viewBox="0 0 6 5"><path d="M.5 1.500L2.500 2L3.300 1.800L5.200 3.500M3.900 3.700l1.400 -.1l-.1 -1.400" fill="none" stroke="#f4607a" stroke-width=".55"/></svg>
<div class="ln2" style="left:217px;top:430.7px;width:178px"></div>
<svg class="a" style="left:226.6px;top:436.3px" width="12" height="12" viewBox="0 0 12 12"><circle cx="6" cy="6" r="6" fill="#2aaef0"/><path d="M3.400 6.200H8.700A2.800 2.800 0 0 0 3.300 5.800A2.900 2.900 0 0 0 8.300 8.100" fill="none" stroke="#fff" stroke-width="1.500"/></svg>
<div class="a" style="left:242px;top:439.3px;font-size:5.2px;font-weight:bold;color:#23272f">Edge</div>
<div class="a" style="left:292px;top:438.1px;font-size:6.4px;color:#23272f">8,570</div>
<div class="a" style="left:339.5px;top:438.7px;font-size:5.8px;color:#2fb868;-webkit-text-stroke:.15px #2fb868">+21.092</div>
<svg class="a" style="left:364.5px;top:439.5px" width="6" height="5" viewBox="0 0 6 5"><path d="M.5 3.300L2.500 2.300L3.300 2.800L5.300 1.500M4 1.200l1.400 .2l-.3 1.300" fill="none" stroke="#2fb868" stroke-width=".55"/></svg>
<div class="ln2" style="left:217px;top:452.95px;width:178px"></div>
<svg class="a" style="left:226.6px;top:458.55px" width="12" height="12" viewBox="0 0 12 12"><circle cx="6" cy="6" r="6" fill="#e8980c"/><circle cx="6" cy="6" r="3.300" fill="none" stroke="#fbe6b4" stroke-width="1.300"/><circle cx="6" cy="5.600" r="1.100" fill="#8a4a08"/></svg>
<div class="a" style="left:242px;top:461.55px;font-size:5.2px;font-weight:bold;color:#23272f">Firefox</div>
<div class="a" style="left:292px;top:460.35px;font-size:6.4px;color:#23272f">6,135</div>
<div class="a" style="left:339.5px;top:460.95px;font-size:5.8px;color:#f4607a;-webkit-text-stroke:.15px #f4607a">-2.098</div>
<svg class="a" style="left:361.5px;top:461.75px" width="6" height="5" viewBox="0 0 6 5"><path d="M.5 1.500L2.500 2L3.300 1.800L5.200 3.500M3.900 3.700l1.400 -.1l-.1 -1.400" fill="none" stroke="#f4607a" stroke-width=".55"/></svg>
<div class="ln2" style="left:217px;top:475.2px;width:178px"></div>
<svg class="a" style="left:226.6px;top:480.8px" width="12" height="12" viewBox="0 0 12 12"><circle cx="6" cy="6" r="6" fill="#f4506f"/><circle cx="6" cy="6" r="3.200" fill="none" stroke="#fbd0d8" stroke-width="1"/><circle cx="6" cy="6" r="1.100" fill="none" stroke="#fff" stroke-width=".700"/></svg>
<div class="a" style="left:242px;top:483.8px;font-size:5.2px;font-weight:bold;color:#23272f">Ubuntu</div>
<div class="a" style="left:292px;top:482.6px;font-size:6.4px;color:#23272f">4,789</div>
<div class="a" style="left:339.5px;top:483.2px;font-size:5.8px;color:#2fb868;-webkit-text-stroke:.15px #2fb868">+31.765</div>
<svg class="a" style="left:364.5px;top:484.0px" width="6" height="5" viewBox="0 0 6 5"><path d="M.5 3.300L2.500 2.300L3.300 2.800L5.300 1.500M4 1.200l1.400 .2l-.3 1.300" fill="none" stroke="#2fb868" stroke-width=".55"/></svg>
<div class="t" style="left:414px;top:306px;">Visitors</div>
<div class="sq" style="left:563px;top:303.5px;width:12px;height:12px;border-color:#f8f9fc"></div>
<div class="a" style="left:567.6px;top:306px;font-size:5px;color:#8a8f9c">⋮</div>
<div class="ln" style="left:405px;top:321px;width:178px"></div>
<div class="circ" style="left:440.3px;top:471.5px;width:4.4px;height:4.4px;background:#4a7df6"></div>
<div class="a" style="left:447px;top:470.3px;font-size:6px;color:#8a8f9c">Online visitors</div>
<div class="a" style="left:449px;top:480.3px;font-size:8.4px;color:#23272f;-webkit-text-stroke:.2px #23272f">765,98</div>
<div class="circ" style="left:504.3px;top:471.5px;width:4.4px;height:4.4px;background:#f0a90c"></div>
<div class="a" style="left:511px;top:470.3px;font-size:6px;color:#8a8f9c">Offline visitors</div>
<div class="a" style="left:513.5px;top:480.3px;font-size:8.4px;color:#23272f;-webkit-text-stroke:.2px #23272f">241,98</div>
<div class="t" style="left:602px;top:306px;">Top Countries By Visitors</div>
<div class="sq" style="left:751px;top:303.5px;width:12px;height:12px;border-color:#f8f9fc"></div>
<div class="a" style="left:755.6px;top:306px;font-size:5px;color:#8a8f9c">⋮</div>
<div class="ln" style="left:593px;top:321px;width:179px"></div>
<div class="a" style="left:603.5px;top:328px;font-size:5.5px;font-weight:bold;color:#23272f">Country</div>
<div class="a" style="left:675px;top:328px;font-size:5.5px;font-weight:bold;color:#23272f">Users</div>
<div class="a" style="left:715px;top:328px;font-size:5.5px;font-weight:bold;color:#23272f">Bounce Rate</div>
<div class="ln2" style="left:593px;top:340.5px;width:179px"></div>
<div class="circ" style="left:603.1px;top:347.6px;width:9px;height:9px;background:linear-gradient(#e8636f 0,#f3a3aa 18%,#ee7580 36%,#f3a3aa 54%,#ee7580 72%,#f3a3aa 90%)"></div>
<div class="a" style="left:603.1px;top:347.6px;width:4.7px;height:4.7px;background:#5960a8;border-radius:5px 0 0 0"></div>
<div class="a" style="left:615.5px;top:348.7px;font-size:5.5px;font-weight:bold;color:#23272f">USA</div>
<div class="a" style="left:675px;top:349.1px;font-size:5.8px;color:#23272f">56,857</div>
<div class="a" style="left:715px;top:349.0px;font-size:6.1px;color:#23272f;-webkit-text-stroke:.28px #23272f">98.75k</div>
<div class="ln2" style="left:593px;top:363.25px;width:179px"></div>
<div class="circ" style="left:603.1px;top:370.35px;width:9px;height:9px;background:linear-gradient(#f39a35 0 33%,#fff 33% 66%,#2a9a45 66%)"></div>
<div class="a" style="left:615.5px;top:371.45px;font-size:5.5px;font-weight:bold;color:#23272f">India</div>
<div class="a" style="left:675px;top:371.85px;font-size:5.8px;color:#23272f">19,857</div>
<div class="a" style="left:715px;top:371.75px;font-size:6.1px;color:#23272f;-webkit-text-stroke:.28px #23272f">14.82k</div>
<div class="ln2" style="left:593px;top:386.0px;width:179px"></div>
<div class="circ" style="left:603.1px;top:393.1px;width:9px;height:9px;background:linear-gradient(#74b6ea 0 33%,#fff 33% 66%,#74b6ea 66%)"></div>
<div class="a" style="left:615.5px;top:394.2px;font-size:5.5px;font-weight:bold;color:#23272f">Argentina</div>
<div class="a" style="left:675px;top:394.6px;font-size:5.8px;color:#23272f">16,857</div>
<div class="a" style="left:715px;top:394.5px;font-size:6.1px;color:#23272f;-webkit-text-stroke:.28px #23272f">14.82k</div>
<div class="ln2" style="left:593px;top:408.75px;width:179px"></div>
<div class="circ" style="left:603.1px;top:415.85px;width:9px;height:9px;background:linear-gradient(90deg,#e0313b 0 28%,#fff 28% 72%,#e0313b 72%)"></div>
<div class="a" style="left:606.5px;top:418.55px;width:2.5px;height:3px;background:#e0313b"></div>
<div class="a" style="left:615.5px;top:416.95px;font-size:5.5px;font-weight:bold;color:#23272f">Canada</div>
<div class="a" style="left:675px;top:417.35px;font-size:5.8px;color:#23272f">23,767</div>
<div class="a" style="left:715px;top:417.25px;font-size:6.1px;color:#23272f;-webkit-text-stroke:.28px #23272f">91.60k</div>
<div class="ln2" style="left:593px;top:431.5px;width:179px"></div>
<div class="circ" style="left:603.1px;top:438.6px;width:9px;height:9px;background:linear-gradient(#fff 0 33%,#2c5fc9 33% 66%,#dd3340 66%)"></div>
<div class="a" style="left:615.5px;top:439.7px;font-size:5.5px;font-weight:bold;color:#23272f">Russia</div>
<div class="a" style="left:675px;top:440.1px;font-size:5.8px;color:#23272f">57,907</div>
<div class="a" style="left:715px;top:440.0px;font-size:6.1px;color:#23272f;-webkit-text-stroke:.28px #23272f">15.60k</div>
<div class="ln2" style="left:593px;top:454.25px;width:179px"></div>
<div class="circ" style="left:603.1px;top:461.35px;width:9px;height:9px;background:linear-gradient(#d8303a 0 25%,#f6c23c 25% 75%,#d8303a 75%)"></div>
<div class="a" style="left:615.5px;top:462.45px;font-size:5.5px;font-weight:bold;color:#23272f">Spain</div>
<div class="a" style="left:675px;top:462.85px;font-size:5.8px;color:#23272f">09,857</div>
<div class="a" style="left:715px;top:462.75px;font-size:6.1px;color:#23272f;-webkit-text-stroke:.28px #23272f">14.60k</div>
<div class="ln2" style="left:593px;top:477.0px;width:179px"></div>
<div class="circ" style="left:603.1px;top:484.1px;width:9px;height:9px;background:linear-gradient(90deg,#2a8a4a 0 33%,#fff 33% 66%,#d8303a 66%)"></div>
<div class="a" style="left:615.5px;top:485.2px;font-size:5.5px;font-weight:bold;color:#23272f">Mexico</div>
<div class="a" style="left:675px;top:485.6px;font-size:5.8px;color:#23272f">12,857</div>
<div class="a" style="left:715px;top:485.5px;font-size:6.1px;color:#23272f;-webkit-text-stroke:.28px #23272f">14.60k</div>
<div class="t" style="left:37px;top:521.5px;">Projects Summary</div>
<div class="sq" style="left:653.4px;top:519px;width:72.2px;height:12.4px;border-color:#f4f5f9"></div>
<div class="a" style="left:659.5px;top:522.3px;font-size:5.1px;color:#a9aeb8">Search Here</div>
<div class="btn" style="left:732.7px;top:518.9px;width:30.8px;height:12.4px;line-height:12.4px;font-size:4.6px;text-align:left;padding-left:4.2px">Sort By</div>
<svg class="a" style="left:754.4px;top:523px" width="5" height="5" viewBox="0 0 5 5"><path d="M1 1.8L2.5 3.3L4 1.8" fill="none" stroke="#fff" stroke-width=".6"/></svg>
<div class="ln" style="left:28px;top:540px;width:744px"></div>
<div class="a" style="left:37px;top:549px;width:726px;height:90px;border:1px solid #f7f8fb;border-bottom:0"></div>
<div class="a" style="left:86.7px;top:549px;width:1px;height:90px;background:#f7f8fb"></div>
<div class="a" style="left:295.3px;top:549px;width:1px;height:90px;background:#f7f8fb"></div>
<div class="a" style="left:407px;top:549px;width:1px;height:90px;background:#f7f8fb"></div>
<div class="a" style="left:500.3px;top:549px;width:1px;height:90px;background:#f7f8fb"></div>
<div class="a" style="left:587.7px;top:549px;width:1px;height:90px;background:#f7f8fb"></div>
<div class="a" style="left:669.5px;top:549px;width:1px;height:90px;background:#f7f8fb"></div>
<div class="ln2" style="left:37px;top:568px;width:726px"></div>
<div class="ln2" style="left:37px;top:592px;width:726px"></div>
<div class="ln2" style="left:37px;top:616px;width:726px"></div>
<div class="a" style="left:42px;top:555.5px;font-size:5.5px;font-weight:bold;color:#23272f">S.No</div>
<div class="a" style="left:92.5px;top:555.5px;font-size:5.5px;font-weight:bold;color:#23272f">Project Name</div>
<div class="a" style="left:300.5px;top:555.5px;font-size:5.5px;font-weight:bold;color:#23272f">Team Members</div>
<div class="a" style="left:412.5px;top:555.5px;font-size:5.5px;font-weight:bold;color:#23272f">Start Date</div>
<div class="a" style="left:506px;top:555.5px;font-size:5.5px;font-weight:bold;color:#23272f">Due Date</div>
<div class="a" style="left:592px;top:555.5px;font-size:5.5px;font-weight:bold;color:#23272f">Status</div>
<div class="a" style="left:675.5px;top:555.5px;font-size:5.5px;font-weight:bold;color:#23272f">Action</div>
<div class="a" style="left:42px;top:577.8px;font-size:5.2px;color:#3a3f4a">01</div>
<div class="a" style="left:92.5px;top:577.6px;font-size:5.5px;color:#23272f">Home Page</div>
<div class="a" style="left:412.5px;top:577.6px;font-size:5.6px;color:#23272f">01 Apr 2023</div>
<div class="a" style="left:506px;top:577.6px;font-size:5.6px;color:#23272f">14-04-2023</div>
<svg class="a" style="left:300.5px;top:576.8px" width="8.4" height="8.4" viewBox="0 0 10 10"><defs><clipPath id="c00"><circle cx="5" cy="5" r="4.800"/></clipPath></defs><circle cx="5" cy="5" r="5" fill="#fff"/><g clip-path="url(#c00)"><rect width="10" height="10" fill="#5a4a48"/><ellipse cx="5" cy="4.400" rx="2.700" ry="3" fill="#2e2422"/><ellipse cx="5" cy="4.700" rx="1.700" ry="2.100" fill="#d8b098"/><ellipse cx="5" cy="10.200" rx="4" ry="2.800" fill="#6a5a58"/></g></svg>
<svg class="a" style="left:305.9px;top:576.8px" width="8.4" height="8.4" viewBox="0 0 10 10"><defs><clipPath id="c01"><circle cx="5" cy="5" r="4.800"/></clipPath></defs><circle cx="5" cy="5" r="5" fill="#fff"/><g clip-path="url(#c01)"><rect width="10" height="10" fill="#6a5a50"/><ellipse cx="5" cy="4.400" rx="2.700" ry="3" fill="#3a2a26"/><ellipse cx="5" cy="4.700" rx="1.700" ry="2.100" fill="#d0a890"/><ellipse cx="5" cy="10.200" rx="4" ry="2.800" fill="#8a7a78"/></g></svg>
<svg class="a" style="left:311.3px;top:576.8px" width="8.4" height="8.4" viewBox="0 0 10 10"><defs><clipPath id="c02"><circle cx="5" cy="5" r="4.800"/></clipPath></defs><circle cx="5" cy="5" r="5" fill="#fff"/><g clip-path="url(#c02)"><rect width="10" height="10" fill="#5a5048"/><ellipse cx="5" cy="4.400" rx="2.700" ry="3" fill="#2a2220"/><ellipse cx="5" cy="4.700" rx="1.700" ry="2.100" fill="#c8a088"/><ellipse cx="5" cy="10.200" rx="4" ry="2.800" fill="#4a4a58"/></g></svg>
<div class="circ" style="left:316.700px;top:576.8px;width:8.400px;height:8.400px;background:#4a7df6;color:#fff;font-size:3.600px;font-weight:bold;text-align:center;line-height:8.400px">+3</div>
<div class="a" style="left:592.3px;top:577.0px;width:26.2px;height:7.4px;line-height:7.4px;background:#e9f0fe;color:#5a8af7;font-size:3.9px;font-weight:bold;text-align:center;border-radius:1px">In Progress</div>
<div class="a" style="left:675.5px;top:574.0px;width:13.1px;height:13.1px;background:#e9f0fe;border-radius:2px"></div>
<svg class="a" style="left:679px;top:577.3px" width="6.4" height="6.4" viewBox="0 0 6 6"><path d="M1.1 4.9L1.4 3.6L3.9 1.1L4.9 2.1L2.4 4.600Z" fill="#5a8af7"/></svg>
<div class="a" style="left:693.4px;top:574.0px;width:13.1px;height:13.1px;background:#fdeaee;border-radius:2px"></div>
<svg class="a" style="left:697.3px;top:577.5px" width="6" height="6" viewBox="0 0 6 6"><path d="M1.600 2h2.800v2.600q0 .500 -.500 .500h-1.800q-.500 0 -.500 -.500zM1.100 1.800h3.800M2.400 1.200h1.200" fill="none" stroke="#f4607a" stroke-width=".6"/></svg>
<div class="a" style="left:42px;top:601.9px;font-size:5.2px;color:#3a3f4a">02</div>
<div class="a" style="left:92.5px;top:601.7px;font-size:5.5px;color:#23272f">Landing Design</div>
<div class="a" style="left:412.5px;top:601.7px;font-size:5.6px;color:#23272f">02 Apr 2023</div>
<div class="a" style="left:506px;top:601.7px;font-size:5.6px;color:#23272f">20-04-2023</div>
<svg class="a" style="left:300.5px;top:600.9px" width="8.4" height="8.4" viewBox="0 0 10 10"><defs><clipPath id="c10"><circle cx="5" cy="5" r="4.800"/></clipPath></defs><circle cx="5" cy="5" r="5" fill="#fff"/><g clip-path="url(#c10)"><rect width="10" height="10" fill="#f4efec"/><ellipse cx="5" cy="4.400" rx="2.700" ry="3" fill="#3a2a26"/><ellipse cx="5" cy="4.700" rx="1.700" ry="2.100" fill="#d8a080"/><ellipse cx="5" cy="10.200" rx="4" ry="2.800" fill="#e8e0dc"/></g></svg>
<svg class="a" style="left:305.9px;top:600.9px" width="8.4" height="8.4" viewBox="0 0 10 10"><defs><clipPath id="c11"><circle cx="5" cy="5" r="4.800"/></clipPath></defs><circle cx="5" cy="5" r="5" fill="#fff"/><g clip-path="url(#c11)"><rect width="10" height="10" fill="#f6f0f2"/><ellipse cx="5" cy="4.400" rx="2.700" ry="3" fill="#4a3030"/><ellipse cx="5" cy="4.700" rx="1.700" ry="2.100" fill="#e0b0a0"/><ellipse cx="5" cy="10.200" rx="4" ry="2.800" fill="#c83848"/></g></svg>
<svg class="a" style="left:311.3px;top:600.9px" width="8.4" height="8.4" viewBox="0 0 10 10"><defs><clipPath id="c12"><circle cx="5" cy="5" r="4.800"/></clipPath></defs><circle cx="5" cy="5" r="5" fill="#fff"/><g clip-path="url(#c12)"><rect width="10" height="10" fill="#7a88a8"/><ellipse cx="5" cy="4.400" rx="2.700" ry="3" fill="#2e2830"/><ellipse cx="5" cy="4.700" rx="1.700" ry="2.100" fill="#d8b0a0"/><ellipse cx="5" cy="10.200" rx="4" ry="2.800" fill="#4a5a80"/></g></svg>
<svg class="a" style="left:316.7px;top:600.9px" width="8.4" height="8.4" viewBox="0 0 10 10"><defs><clipPath id="c13"><circle cx="5" cy="5" r="4.800"/></clipPath></defs><circle cx="5" cy="5" r="5" fill="#fff"/><g clip-path="url(#c13)"><rect width="10" height="10" fill="#f0a020"/><ellipse cx="5" cy="4.400" rx="2.700" ry="3" fill="#3a2a26"/><ellipse cx="5" cy="4.700" rx="1.700" ry="2.100" fill="#d8a888"/><ellipse cx="5" cy="10.200" rx="4" ry="2.800" fill="#2a9a9a"/></g></svg>
<div class="a" style="left:592.3px;top:601.1px;width:26.2px;height:7.4px;line-height:7.4px;background:#e9f0fe;color:#5a8af7;font-size:3.9px;font-weight:bold;text-align:center;border-radius:1px">In Progress</div>
<div class="a" style="left:675.5px;top:598.1px;width:13.1px;height:13.1px;background:#e9f0fe;border-radius:2px"></div>
<svg class="a" style="left:679px;top:601.4px" width="6.4" height="6.4" viewBox="0 0 6 6"><path d="M1.1 4.9L1.4 3.6L3.9 1.1L4.9 2.1L2.4 4.600Z" fill="#5a8af7"/></svg>
<div class="a" style="left:693.4px;top:598.1px;width:13.1px;height:13.1px;background:#fdeaee;border-radius:2px"></div>
<svg class="a" style="left:697.3px;top:601.6px" width="6" height="6" viewBox="0 0 6 6"><path d="M1.600 2h2.800v2.600q0 .500 -.500 .500h-1.800q-.500 0 -.500 -.500zM1.100 1.800h3.800M2.400 1.200h1.200" fill="none" stroke="#f4607a" stroke-width=".6"/></svg>
<div class="a" style="left:42px;top:626.0px;font-size:5.2px;color:#3a3f4a">03</div>
<div class="a" style="left:92.5px;top:625.8000000000001px;font-size:5.5px;color:#23272f">New Template Design</div>
<div class="a" style="left:412.5px;top:625.8000000000001px;font-size:5.6px;color:#23272f">10 Apr 2023</div>
<div class="a" style="left:506px;top:625.8000000000001px;font-size:5.6px;color:#23272f">29-05-2023</div>
<svg class="a" style="left:300.5px;top:625.0px" width="8.4" height="8.4" viewBox="0 0 10 10"><defs><clipPath id="c20"><circle cx="5" cy="5" r="4.800"/></clipPath></defs><circle cx="5" cy="5" r="5" fill="#fff"/><g clip-path="url(#c20)"><rect width="10" height="10" fill="#d03040"/><ellipse cx="5" cy="4.400" rx="2.700" ry="3" fill="#2a2022"/><ellipse cx="5" cy="4.700" rx="1.700" ry="2.100" fill="#d0a088"/><ellipse cx="5" cy="10.200" rx="4" ry="2.800" fill="#3a3038"/></g></svg>
<svg class="a" style="left:305.9px;top:625.0px" width="8.4" height="8.4" viewBox="0 0 10 10"><defs><clipPath id="c21"><circle cx="5" cy="5" r="4.800"/></clipPath></defs><circle cx="5" cy="5" r="5" fill="#fff"/><g clip-path="url(#c21)"><rect width="10" height="10" fill="#9a9a9a"/><ellipse cx="5" cy="4.400" rx="2.700" ry="3" fill="#4a3a38"/><ellipse cx="5" cy="4.700" rx="1.700" ry="2.100" fill="#d8b8a0"/><ellipse cx="5" cy="10.200" rx="4" ry="2.800" fill="#e8e8e8"/></g></svg>
<svg class="a" style="left:311.3px;top:625.0px" width="8.4" height="8.4" viewBox="0 0 10 10"><defs><clipPath id="c22"><circle cx="5" cy="5" r="4.800"/></clipPath></defs><circle cx="5" cy="5" r="5" fill="#fff"/><g clip-path="url(#c22)"><rect width="10" height="10" fill="#d03848"/><ellipse cx="5" cy="4.400" rx="2.700" ry="3" fill="#2a2022"/><ellipse cx="5" cy="4.700" rx="1.700" ry="2.100" fill="#d8a890"/><ellipse cx="5" cy="10.200" rx="4" ry="2.800" fill="#f0f0f0"/></g></svg>
<div class="a" style="left:592.3px;top:625.2px;width:20.5px;height:7.4px;line-height:7.4px;background:#fef5e4;color:#eaa530;font-size:3.9px;font-weight:bold;text-align:center;border-radius:1px">Pending</div>
<div class="a" style="left:675.5px;top:622.2px;width:13.1px;height:13.1px;background:#e9f0fe;border-radius:2px"></div>
<svg class="a" style="left:679px;top:625.5px" width="6.4" height="6.4" viewBox="0 0 6 6"><path d="M1.1 4.9L1.4 3.6L3.9 1.1L4.9 2.1L2.4 4.600Z" fill="#5a8af7"/></svg>
<div class="a" style="left:693.4px;top:622.2px;width:13.1px;height:13.1px;background:#fdeaee;border-radius:2px"></div>
<svg class="a" style="left:697.3px;top:625.7px" width="6" height="6" viewBox="0 0 6 6"><path d="M1.600 2h2.800v2.600q0 .500 -.500 .500h-1.800q-.500 0 -.500 -.500zM1.100 1.800h3.800M2.400 1.200h1.200" fill="none" stroke="#f4607a" stroke-width=".6"/></svg>
<div class="a" style="left:21.6px;top:42px;width:80.4px;height:72.8px;background:#fff;border-radius:0 0 2px 2px;box-shadow:0 1px 6px rgba(60,80,130,.13)"></div>
<div class="a" style="left:33.5px;top:47.6px;font-size:5.8px;color:#4a7df6;-webkit-text-stroke:.15px #4a7df6;">Dashboard1</div>
<div class="a" style="left:27.5px;top:50.4px;width:1.6px;height:1.6px;background:#4a7df6;transform:rotate(45deg)"></div>
<div class="a" style="left:33.5px;top:61.6px;font-size:5.8px;color:#7f8493;">Dashboard2</div>
<div class="a" style="left:27.5px;top:64.4px;width:1.6px;height:1.6px;background:#9aa0ab;transform:rotate(45deg)"></div>
<div class="a" style="left:33.5px;top:75.6px;font-size:5.8px;color:#7f8493;">Dashboard3</div>
<div class="a" style="left:27.5px;top:78.39999999999999px;width:1.6px;height:1.6px;background:#9aa0ab;transform:rotate(45deg)"></div>
<div class="a" style="left:33.5px;top:89.6px;font-size:5.8px;color:#7f8493;">Dashboard4</div>
<div class="a" style="left:27.5px;top:92.39999999999999px;width:1.6px;height:1.6px;background:#9aa0ab;transform:rotate(45deg)"></div>
<div class="a" style="left:33.5px;top:103.6px;font-size:5.8px;color:#7f8493;">Dashboard5</div>
<div class="a" style="left:27.5px;top:106.39999999999999px;width:1.6px;height:1.6px;background:#9aa0ab;transform:rotate(45deg)"></div></body></html>
